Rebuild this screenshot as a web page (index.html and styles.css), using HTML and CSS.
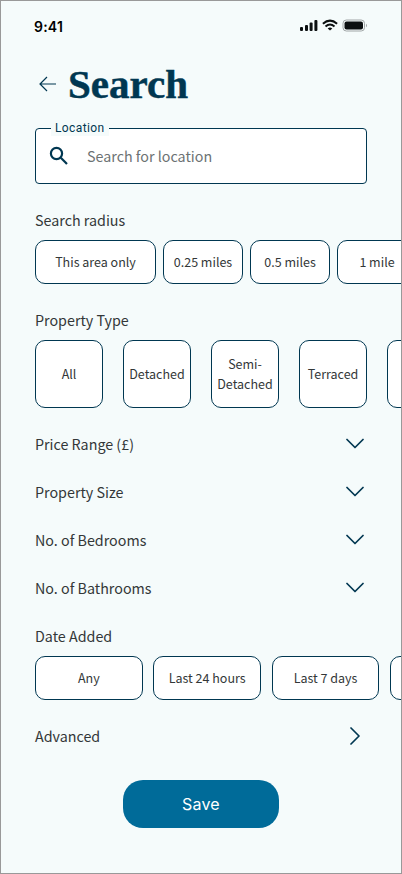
FILE: index.html
```html
<!DOCTYPE html>
<html lang="en">
<head>
<meta charset="utf-8">
<meta name="viewport" content="width=device-width, initial-scale=1">
<title>Search</title>
<link rel="stylesheet" href="styles.css">
</head>
<body>
<main class="screen">
  <div class="status">
    <span class="time">9:41</span>
    <svg class="status-icons" width="68" height="14" viewBox="0 0 68 14">
      <g fill="#0b0f10">
        <rect x="0" y="8" width="3" height="4" rx="1"/>
        <rect x="5" y="6" width="3" height="6" rx="1"/>
        <rect x="9.6" y="3.5" width="3" height="8.500" rx="1"/>
        <rect x="14.400" y="1" width="3" height="11" rx="1"/>
      </g>
      <g fill="none" stroke="#0b0f10" stroke-width="2">
        <path d="M22.900 4.700Q30 -1.400 37.100 4.700"/>
        <path d="M25.500 7.400Q30 3.600 34.500 7.400"/>
      </g>
      <path d="M27.700 9.400Q30 7.600 32.300 9.400L30 11.600Z" fill="#0b0f10"/>
      <rect x="43" y="1" width="21.500" height="11" rx="3.300" fill="none" stroke="#a0a5a6"/>
      <rect x="44.500" y="2.500" width="18.500" height="8" rx="2" fill="#0b0f10"/>
      <path d="M66 4.700v3.600q1-.5 1-1.800t-1-1.800z" fill="#a0a5a6"/>
    </svg>
  </div>

  <header class="heading">
    <svg class="back" width="18" height="16" viewBox="0 0 18 16"><path d="M17 8H1M8 1L1 8l7 7"/></svg>
    <h1>Search</h1>
  </header>

  <div class="field">
    <span class="field-label">Location</span>
    <svg class="magnifier" width="20" height="20" viewBox="0 0 20 20"><circle cx="7.500" cy="7.500" r="5.600"/><path d="M11.800 11.800L18 18"/></svg>
    <span class="placeholder">Search for location</span>
  </div>

  <h2>Search radius</h2>
  <div class="row radius">
    <div class="chip wide">This area only</div>
    <div class="chip">0.25 miles</div>
    <div class="chip">0.5 miles</div>
    <div class="chip">1 mile</div>
  </div>

  <h2>Property Type</h2>
  <div class="row types">
    <div class="chip">All</div>
    <div class="chip">Detached</div>
    <div class="chip">Semi-<br>Detached</div>
    <div class="chip">Terraced</div>
    <div class="chip"></div>
  </div>

  <div class="line"><span>Price Range (£)</span><svg class="chevron" width="18" height="18" viewBox="0 0 18 18"><path d="M1 4.500l8 8 8-8"/></svg></div>
  <div class="line"><span>Property Size</span><svg class="chevron" width="18" height="18" viewBox="0 0 18 18"><path d="M1 4.500l8 8 8-8"/></svg></div>
  <div class="line"><span>No. of Bedrooms</span><svg class="chevron" width="18" height="18" viewBox="0 0 18 18"><path d="M1 4.500l8 8 8-8"/></svg></div>
  <div class="line"><span>No. of Bathrooms</span><svg class="chevron" width="18" height="18" viewBox="0 0 18 18"><path d="M1 4.500l8 8 8-8"/></svg></div>

  <h2 class="date-title">Date Added</h2>
  <div class="row dates">
    <div class="chip">Any</div>
    <div class="chip">Last 24 hours</div>
    <div class="chip">Last 7 days</div>
    <div class="chip"></div>
  </div>

  <div class="line advanced"><span>Advanced</span><svg class="chevron" width="18" height="18" viewBox="0 0 18 18"><path d="M5 1l8 8-8 8"/></svg></div>

  <button class="save">Save</button>
</main>
</body>
</html>
```
FILE: styles.css
```css
* { box-sizing: border-box; }

body { margin: 0; }

.screen {
  display: flex;
  flex-direction: column;
  width: 402px;
  height: 874px;
  padding: 0 34px;
  overflow: hidden;
  border: 1px solid #999;
  background: #f5fbfb;
  color: #333738;
  font-family: "Noto Sans CJK JP", "Noto Sans", sans-serif;
  font-size: 14.3px;
  line-height: 24px;
}

.status {
  display: flex;
  justify-content: space-between;
  height: 20px;
  margin: 16px -1px 0;
}

.time {
  color: #000;
  font: 600 14px/20px Inter, sans-serif;
  letter-spacing: 0.2px;
}

.status-icons { margin: 2px 0 0; }

.heading {
  display: flex;
  align-items: center;
  gap: 11px;
  height: 48px;
  margin-top: 23px;
  padding-left: 4px;
}

h1 {
  margin: 0;
  color: #003751;
  font: 700 41px/48px "Liberation Serif", serif;
  -webkit-text-stroke: 0.5px #003751;
}

.back, .magnifier, .chevron {
  flex: none;
  fill: none;
  stroke: #003751;
}

.back { stroke-width: 1.2; }
.magnifier { stroke-width: 2.2; }
.chevron { stroke-width: 1.7; stroke-linecap: round; stroke-linejoin: round; margin-right: 3px; }

.field {
  position: relative;
  display: flex;
  flex: none;
  align-items: center;
  gap: 18px;
  height: 56px;
  margin-top: 20px;
  padding-left: 13px;
  border: 1px solid #003751;
  border-radius: 4px;
  background: #fff;
}

.field-label {
  position: absolute;
  top: -9px;
  left: 15px;
  padding: 0 4px;
  background: #f5fbfb;
  color: #003751;
  font: 400 12px/16px Roboto, sans-serif;
  letter-spacing: 0.4px;
}

.placeholder { color: #6c7273; }

h2 {
  flex: none;
  height: 24px;
  margin: 24px 0 8px;
  font-size: inherit;
  font-weight: 400;
}

.row {
  display: flex;
  flex: none;
  height: 44px;
}

.chip {
  display: flex;
  flex: none;
  align-items: center;
  justify-content: center;
  border: 1px solid #003751;
  border-radius: 10px;
  background: #fff;
  font-size: 12.5px;
  line-height: 20px;
  text-align: center;
}

.radius { gap: 7px; }
.radius .chip { width: 80px; }
.radius .wide { width: 121px; }

.types { gap: 20px; height: 68px; margin-bottom: 12px; }
.types .chip { width: 68px; }

.dates { gap: 10.8px; }
.dates .chip { width: 107.6px; }

.line {
  display: flex;
  flex: none;
  align-items: center;
  justify-content: space-between;
  height: 48px;
}

.date-title { margin: 12px 0 8px; }
.advanced { margin-top: 12px; }

.save {
  flex: none;
  align-self: center;
  width: 156px;
  height: 48px;
  margin-top: 20px;
  border: 0;
  border-radius: 20px;
  background: #006b99;
  color: #fff;
  font: 400 16px/24px Inter, sans-serif;
  letter-spacing: 0.2px;
}
```
